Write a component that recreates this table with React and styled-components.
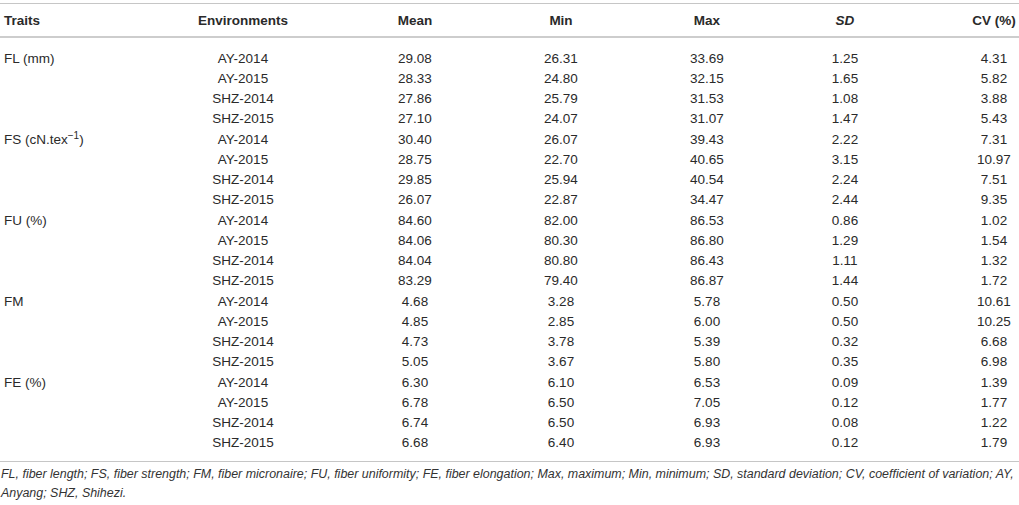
import React from 'react'
import styled, { createGlobalStyle } from 'styled-components'

const GlobalStyle = createGlobalStyle`
  body {
    margin: 0;
    background: #fff;
    font-family: 'Liberation Sans', Arial, Helvetica, sans-serif;
    color: #2a2a2a;
  }
`

const COLUMNS = '170px 146px 198px 94px 198px 78px 1fr 50px'

const Page = styled.div`
  padding-top: 3px;
  width: 1019px;
`

const Table = styled.div`
  border-top: 1px solid #c6c6c6;
  border-bottom: 1px solid #c6c6c6;
`

const Row = styled.div`
  display: grid;
  grid-template-columns: ${COLUMNS};
  align-items: center;
  height: ${p => p.$height || '20.25px'};
  font-size: 13.5px;
`

const HeadRow = styled(Row)`
  font-weight: bold;
  border-bottom: 2px solid #cdcdcd;
`

const Body = styled.div`
  padding: 10px 0 8px;
`

const Cell = styled.div`
  text-align: ${p => (p.$left ? 'left' : 'center')};
  padding-left: ${p => (p.$left ? '4px' : '0')};
  font-style: ${p => (p.$italic ? 'italic' : 'normal')};
  white-space: nowrap;

  &:last-child {
    grid-column: -2 / -1;
  }
`

const Sup = styled.sup`
  font-size: 10px;
  line-height: 0;
  vertical-align: 5px;
`

const Footnote = styled.p`
  margin: 3px 0 0;
  padding-left: 1px;
  font-size: 12.45px;
  line-height: 19px;
  font-style: italic;
  color: #333;
  white-space: nowrap;
`

const groups = [
  {
    trait: 'FL (mm)',
    rows: [
      ['AY-2014', '29.08', '26.31', '33.69', '1.25', '4.31'],
      ['AY-2015', '28.33', '24.80', '32.15', '1.65', '5.82'],
      ['SHZ-2014', '27.86', '25.79', '31.53', '1.08', '3.88'],
      ['SHZ-2015', '27.10', '24.07', '31.07', '1.47', '5.43']
    ]
  },
  {
    trait: <>FS (cN.tex<Sup>−1</Sup>)</>,
    rows: [
      ['AY-2014', '30.40', '26.07', '39.43', '2.22', '7.31'],
      ['AY-2015', '28.75', '22.70', '40.65', '3.15', '10.97'],
      ['SHZ-2014', '29.85', '25.94', '40.54', '2.24', '7.51'],
      ['SHZ-2015', '26.07', '22.87', '34.47', '2.44', '9.35']
    ]
  },
  {
    trait: 'FU (%)',
    rows: [
      ['AY-2014', '84.60', '82.00', '86.53', '0.86', '1.02'],
      ['AY-2015', '84.06', '80.30', '86.80', '1.29', '1.54'],
      ['SHZ-2014', '84.04', '80.80', '86.43', '1.11', '1.32'],
      ['SHZ-2015', '83.29', '79.40', '86.87', '1.44', '1.72']
    ]
  },
  {
    trait: 'FM',
    rows: [
      ['AY-2014', '4.68', '3.28', '5.78', '0.50', '10.61'],
      ['AY-2015', '4.85', '2.85', '6.00', '0.50', '10.25'],
      ['SHZ-2014', '4.73', '3.78', '5.39', '0.32', '6.68'],
      ['SHZ-2015', '5.05', '3.67', '5.80', '0.35', '6.98']
    ]
  },
  {
    trait: 'FE (%)',
    rows: [
      ['AY-2014', '6.30', '6.10', '6.53', '0.09', '1.39'],
      ['AY-2015', '6.78', '6.50', '7.05', '0.12', '1.77'],
      ['SHZ-2014', '6.74', '6.50', '6.93', '0.08', '1.22'],
      ['SHZ-2015', '6.68', '6.40', '6.93', '0.12', '1.79']
    ]
  }
]

export default function App () {
  return (
    <Page>
      <GlobalStyle />
      <Table>
        <HeadRow $height='32px'>
          <Cell $left>Traits</Cell>
          <Cell>Environments</Cell>
          <Cell>Mean</Cell>
          <Cell>Min</Cell>
          <Cell>Max</Cell>
          <Cell $italic>SD</Cell>
          <Cell>CV (%)</Cell>
        </HeadRow>
        <Body>
          {groups.map((g, gi) =>
            g.rows.map((r, ri) => (
              <Row key={`${gi}-${ri}`}>
                <Cell $left>{ri === 0 ? g.trait : ''}</Cell>
                {r.map((v, vi) => <Cell key={vi}>{v}</Cell>)}
              </Row>
            ))
          )}
        </Body>
      </Table>
      <Footnote>
        FL, fiber length; FS, fiber strength; FM, fiber micronaire; FU, fiber uniformity; FE, fiber elongation; Max, maximum; Min, minimum; SD, standard deviation; CV, coefficient of variation; AY,<br />
        Anyang; SHZ, Shihezi.
      </Footnote>
    </Page>
  )
}
